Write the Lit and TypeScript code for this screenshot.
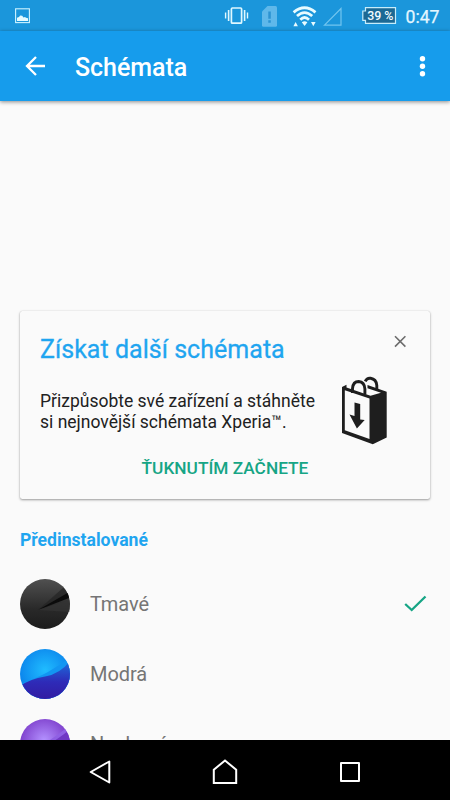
import { LitElement, html, svg, css } from "lit";
import { customElement, property } from "lit/decorators.js";

@customElement("status-bar")
class StatusBar extends LitElement {
  static styles = css`
    :host { display: flex; height: 31px; background: #1b96db; color: #eaf9ff; }
    .icons { display: block; width: 450px; height: 31px; flex: none; }
    .battery { font: 500 12.5px Roboto, sans-serif; fill: #f0fbff; }
    .clock { font: 400 18px Roboto, sans-serif; fill: #e4f6ff; stroke: #e4f6ff; stroke-width: .25px; }
  `;
  render() {
    return html`<svg class="icons" viewBox="0 0 450 31">
      <g fill="none" stroke="#cdf3ff" stroke-width="1.1">
        <rect x="15.6" y="8.8" width="13.8" height="13.8" />
      </g>
      <path d="M17 21v-3.2l2-.9 1.2-1.3 2 .2 1.3 1.6 1.5-.5 1 .9 2 .4V21z" fill="#e4faff" />
      <g fill="none" stroke="#e0f8ff">
        <rect x="231.4" y="8" width="10.2" height="15.2" rx="1" stroke-width="1.7" />
        <path d="M228.6 10v11M244.6 10v11" stroke-width="1.6" />
        <path d="M225.6 12.5v6M247.5 12.5v6" stroke-width="1.4" />
      </g>
      <path d="M267.5 6h8q1.5 0 1.5 1.5v17.7q0 1.5-1.5 1.5h-12q-1.500 0-1.500-1.500V11.500z" fill="#5fb8ea" />
      <path d="M268.300 11.500h2.500v7.300h-2.500zM268.300 20.300h2.500v2.500h-2.500z" fill="#2b93d2" />
      <g fill="none" stroke="#e8fbff" stroke-width="2.800">
        <path d="M293.600 12.300Q304.500 3.300 315.500 12.300" />
        <path d="M297 16Q304.500 9.200 312.200 16" />
        <path d="M300.300 19.700Q304.500 15.500 309 19.700" />
      </g>
      <path d="M301.800 22.300q2.800-2 5.600 0l-2.800 3.600zM293.400 26.300l2.200-4.300 2.300 4.300zM311 22h4.600l-2.300 4.300z" fill="#e8fbff" />
      <path d="M324.500 25.200L341 8.500v16.700z" fill="none" stroke="#72c5ef" stroke-width="1.200" />
      <path d="M365.500 7.700h30v15.600h-30v-3h-2.700v-9.300h2.700z" fill="#1c6994" stroke="#c6edfb" stroke-width="1.200" />
      <text class="battery" x="367.200" y="20" textLength="26.300" lengthAdjust="spacingAndGlyphs">39 %</text>
      <text class="clock" x="405.500" y="23" textLength="34" lengthAdjust="spacingAndGlyphs">0:47</text>
    </svg>`;
  }
}

@customElement("app-bar")
class AppBar extends LitElement {
  static styles = css`
    :host {
      display: flex; align-items: center; box-sizing: border-box; height: 70px;
      padding: 0 20px 0 25px; background: #169cec; color: #fff;
      box-shadow: 0 1px 4px rgba(0, 0, 0, .45); z-index: 1;
    }
    svg { display: block; flex: none; }
    .title { margin: 4px 0 0 30px; flex: 1; font: 500 25px/30px Roboto, sans-serif; letter-spacing: -.05px; }
  `;
  render() {
    return html`
      <svg width="20" height="22" viewBox="0 0 20 22">
        <path d="M20 11H2M11 2L2 11l9 9" fill="none" stroke="#fff" stroke-width="2.300" />
      </svg>
      <div class="title">Schémata</div>
      <svg width="15" height="22" viewBox="0 0 15 22" fill="#fff">
        <circle cx="7.500" cy="3.700" r="2.700" /><circle cx="7.500" cy="11.300" r="2.700" /><circle cx="7.500" cy="18.800" r="2.700" />
      </svg>`;
  }
}

@customElement("promo-card")
class PromoCard extends LitElement {
  static styles = css`
    :host {
      display: block; box-sizing: border-box; height: 188px; padding: 20px;
      border-radius: 2.5px; background: #fafafa; font-family: Roboto, sans-serif;
      box-shadow: 0 1px 2.500px rgba(0, 0, 0, .38), 0 0 1px rgba(0, 0, 0, .16);
    }
    .head, .body { display: flex; justify-content: space-between; align-items: flex-start; }
    .head { height: 59px; }
    .title { font-size: 25px; line-height: 38px; color: #1fa5f0; white-space: nowrap; letter-spacing: .03px; -webkit-text-stroke: .3px #1fa5f0; }
    .close { margin: 4px 4px 0 0; }
    .copy { margin-top: .5px; font-size: 17.5px; line-height: 21px; color: #212121; white-space: nowrap; }
    .bag { margin: -14px 23px 0 0; }
    .body { height: 67px; }
    .action { text-align: center; margin: 0; font: 500 17.300px/22px Roboto, sans-serif; color: #16a585; }
    svg { display: block; flex: none; }
  `;
  render() {
    return html`
      <div class="head">
        <div class="title">Získat další schémata</div>
        <svg class="close" width="12" height="13" viewBox="0 0 12 13">
          <path d="M1 1.200l10.400 10.400M11.400 1.200L1 11.600" fill="none" stroke="#6c6c6c" stroke-width="1.600" />
        </svg>
      </div>
      <div class="body">
        <div class="copy">Přizpůsobte své zařízení a stáhněte<br />si nejnovější schémata Xperia™.</div>
        <svg class="bag" width="46" height="70" viewBox="0 0 46 70">
          <path fill="#1e1e1e" d="M1 11L5.500 8.800v2.600L29.500 19.800 40 16.800 26.500 12.200V8.900L45.700 15.700V61.500L31.800 68.200 1 57z" />
          <path fill="#fafafa" d="M3.800 14.200L28.500 22.600V63L3.800 54.300z" />
          <path fill="none" stroke="#1e1e1e" stroke-width="2.900" d="M11.500 17v-4.500q.5-7 6.200-7 5.800.5 6.200 7.500v5.500M24.200 5.300q1.800-3.500 5.400-3 5.600.9 6.200 7v4.500" />
          <path fill="#1e1e1e" d="M13.500 26.500l5.700 1.600v15.300l4.500.6L15.900 52.400 8.500 38.500l5 1.500z" />
        </svg>
      </div>
      <div class="action">ŤUKNUTÍM ZAČNETE</div>`;
  }
}

const swatches: Record<string, unknown> = {
  dark: svg`
    <defs><linearGradient id="g" x2="0" y2="1"><stop stop-color="#505050" /><stop offset=".6" stop-color="#292929" /><stop offset="1" stop-color="#1c1c1c" /></linearGradient></defs>
    <circle cx="25" cy="25" r="25" fill="url(#g)" />
    <path d="M18 31L43.500 8.500Q47 13 48 16z" fill="#222" opacity=".65" />
    <path d="M18 31L47.500 14q1.300 3 1.500 5z" fill="#0b0b0b" />
    <path d="M18 31l31.500-10q1 6-.2 12z" fill="#343434" opacity=".65" />`,
  blue: svg`
    <defs>
      <radialGradient id="g" cx=".5" cy=".42" r=".55"><stop stop-color="#20bcff" /><stop offset="1" stop-color="#0a82eb" /></radialGradient>
      <linearGradient id="h" x2="0" y2="1"><stop stop-color="#1c6edc" /><stop offset=".55" stop-color="#2e2bb8" /><stop offset="1" stop-color="#321ca2" /></linearGradient>
      <clipPath id="c"><circle cx="25" cy="25" r="25" /></clipPath>
    </defs>
    <g clip-path="url(#c)">
      <path d="M0 0h50v50H0z" fill="url(#g)" />
      <path d="M0 35Q17 29 28 23T50 8V50H0z" fill="#1296f2" />
      <path d="M0 37Q10 30 25 27.500T50 12V50H0z" fill="url(#h)" />
    </g>`,
  purple: svg`
    <defs>
      <radialGradient id="g" cx=".48" cy=".42" r=".55"><stop stop-color="#b391ff" /><stop offset="1" stop-color="#7735c5" /></radialGradient>
      <clipPath id="c"><circle cx="25" cy="25" r="25" /></clipPath>
    </defs>
    <g clip-path="url(#c)">
      <path d="M0 0h50v50H0z" fill="url(#g)" />
      <path d="M0 37Q17 30 30 21T50 6V50H0z" fill="#8f60e4" />
      <path d="M0 40Q17 33 31 24T50 10V50H0z" fill="#7038c4" />
    </g>`,
};

@customElement("theme-row")
class ThemeRow extends LitElement {
  @property() label = "";
  @property() swatch = "dark";
  @property({ type: Boolean }) selected = false;
  static styles = css`
    :host { display: flex; align-items: center; height: 70px; padding: 0 23px 0 20px; }
    .label { flex: 1; margin: 1px 0 0 20px; font: 400 20px/26px Roboto, sans-serif; color: #757575; letter-spacing: -.05px; }
    svg { display: block; flex: none; }
  `;
  render() {
    return html`
      <svg width="50" height="50" viewBox="0 0 50 50">${swatches[this.swatch]}</svg>
      <div class="label">${this.label}</div>
      ${this.selected
        ? html`<svg width="23" height="18" viewBox="0 0 23 18">
            <path d="M1.200 9l6.500 6L21.500 1.500" fill="none" stroke="#16a585" stroke-width="2.300" />
          </svg>`
        : ""}`;
  }
}

@customElement("nav-bar")
class NavBar extends LitElement {
  static styles = css`
    :host { display: flex; height: 60px; align-items: center; justify-content: space-between; box-sizing: border-box; padding: 4px 87px 0 87px; background: #000; }
    svg { display: block; }
  `;
  render() {
    return html`
      <svg width="26" height="28" viewBox="0 0 26 28"><path d="M3.700 14L22.300 3.500v21z" fill="none" stroke="#fff" stroke-width="2" stroke-linejoin="round" /></svg>
      <svg width="26" height="28" viewBox="0 0 26 28"><path d="M1.800 25V11.800L13 2.500l11.200 9.300V25z" fill="none" stroke="#fff" stroke-width="2" /></svg>
      <svg width="26" height="28" viewBox="0 0 26 28"><path d="M4 5h18v18H4z" fill="none" stroke="#fff" stroke-width="2" stroke-linejoin="round" /></svg>`;
  }
}

@customElement("app-root")
class AppRoot extends LitElement {
  static styles = css`
    :host { display: flex; flex-direction: column; width: 450px; height: 800px; overflow: hidden; background: #fafafa; }
    status-bar, app-bar, nav-bar { flex: none; }
    .content { flex: 1; min-height: 0; overflow: hidden; padding-top: 210px; }
    promo-card { margin: 0 20px; }
    .section { margin: 28.500px 20px 17px; font: 700 17.600px/24px Roboto, sans-serif; color: #1fa5f0; }
  `;
  render() {
    return html`
      <status-bar></status-bar>
      <app-bar></app-bar>
      <div class="content">
        <promo-card></promo-card>
        <div class="section">Předinstalované</div>
        <theme-row label="Tmavé" swatch="dark" selected></theme-row>
        <theme-row label="Modrá" swatch="blue"></theme-row>
        <theme-row label="Nachová" swatch="purple"></theme-row>
      </div>
      <nav-bar></nav-bar>`;
  }
}
